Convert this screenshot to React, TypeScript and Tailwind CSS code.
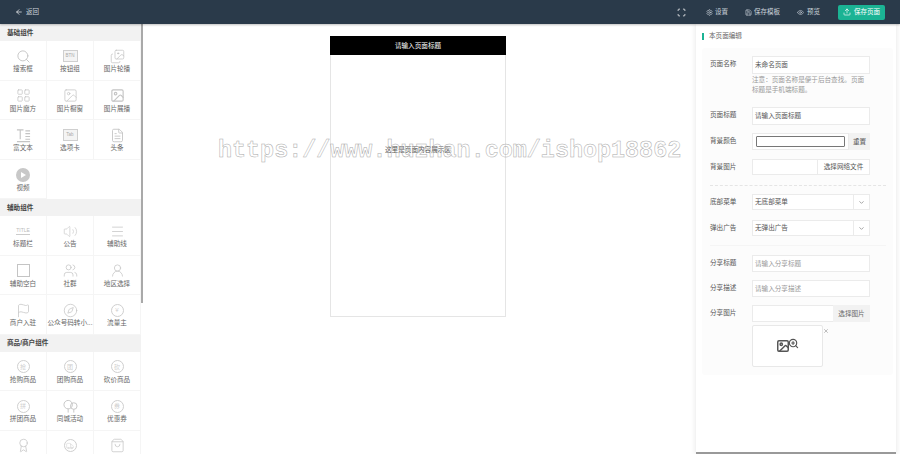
import { ArrowLeft, Scan, Settings, Save, Eye, Upload, Search, LayoutGrid, Image, Images, FileText, Volume2, Menu, Users, UserRound, Flag, Compass, Award, Truck, ShoppingBag, ChevronDown, X, ZoomIn } from 'lucide-react'

const iconClass = 'w-[15px] h-[15px] text-[#c4c4c4]'

function Glyph({ children }) {
  return (
    <span className="w-[13px] h-[13px] rounded-full border border-[#cfcfcf] flex items-center justify-center text-[6px] leading-none text-[#cfcfcf]">
      {children}
    </span>
  )
}

function BoxLabel({ children }) {
  return (
    <span className="w-[15px] h-[12px] border border-[#cfcfcf] bg-[#f4f4f4] flex items-center justify-center text-[4.5px] leading-none text-[#aaa]">
      {children}
    </span>
  )
}

function RichTextIcon() {
  return (
    <svg viewBox="0 0 16 16" className={iconClass} fill="none" stroke="currentColor" strokeWidth="1.2">
      <path d="M1 2h7M4.5 2v10M1 14.5h14M10 3h5M10 6h5M10 9h5M10 12h5" />
    </svg>
  )
}

function BalloonsIcon() {
  return (
    <svg viewBox="0 0 16 16" className={iconClass} fill="none" stroke="currentColor" strokeWidth="1">
      <circle cx="5.5" cy="6" r="4.5" />
      <circle cx="11.5" cy="7.5" r="3.5" />
      <path d="M5.5 10.5v4M11.5 11v3.5" />
    </svg>
  )
}

const basic = [
  { name: '搜索框', icon: <Search className={iconClass} strokeWidth={1.5} /> },
  { name: '按钮组', icon: <BoxLabel>BTN</BoxLabel> },
  { name: '图片轮播', icon: <Images className={iconClass} strokeWidth={1.2} /> },
  { name: '图片魔方', icon: <LayoutGrid className={iconClass} strokeWidth={1.2} /> },
  { name: '图片橱窗', icon: <Image className={iconClass} strokeWidth={1.2} /> },
  { name: '图片展播', icon: <Image className={iconClass} strokeWidth={1.8} /> },
  { name: '富文本', icon: <RichTextIcon /> },
  { name: '选项卡', icon: <BoxLabel>Tab</BoxLabel> },
  { name: '头条', icon: <FileText className={iconClass} strokeWidth={1.4} /> },
  {
    name: '视频',
    icon: (
      <span className="w-[14px] h-[14px] rounded-full bg-[#c8c8c8] flex items-center justify-center">
        <span className="w-0 h-0 border-y-[3.5px] border-y-transparent border-l-[5px] border-l-white ml-[1px]"></span>
      </span>
    ),
  },
]

const helper = [
  { name: '标题栏', icon: <span className="text-[5px] leading-none text-[#bbb] border-b border-[#ccc] pb-[1px]">TITLE</span> },
  { name: '公告', icon: <Volume2 className={iconClass} strokeWidth={1} /> },
  { name: '辅助线', icon: <Menu className={iconClass} strokeWidth={1.2} /> },
  { name: '辅助空白', icon: <span className="w-[13px] h-[13px] border border-[#c4c4c4]"></span> },
  { name: '社群', icon: <Users className={iconClass} strokeWidth={1.2} /> },
  { name: '地区选择', icon: <UserRound className={iconClass} strokeWidth={1.2} /> },
  { name: '商户入驻', icon: <Flag className={iconClass} strokeWidth={1.2} /> },
  { name: '公众号码转小...', icon: <Compass className={iconClass} strokeWidth={1.2} /> },
  { name: '流量主', icon: <Glyph>¥</Glyph> },
]

const goods = [
  { name: '抢购商品', icon: <Glyph>抢</Glyph> },
  { name: '团购商品', icon: <Glyph>团</Glyph> },
  { name: '砍价商品', icon: <Glyph>砍</Glyph> },
  { name: '拼团商品', icon: <Glyph>拼</Glyph> },
  { name: '同城活动', icon: <BalloonsIcon /> },
  { name: '优惠券', icon: <Glyph>券</Glyph> },
  { name: '', icon: <Award className={iconClass} strokeWidth={1.2} /> },
  { name: '', icon: <Glyph><Truck className="w-[8px] h-[8px]" strokeWidth={1.5} /></Glyph> },
  { name: '', icon: <ShoppingBag className={iconClass} strokeWidth={1.2} /> },
]

function Section({ title, items }) {
  return (
    <>
      <div className="h-[17px] shrink-0 bg-[#f2f2f2] pl-[7px] flex items-center text-[6.6px] font-bold text-[#444]">{title}</div>
      <div className="grid grid-cols-3 auto-rows-[39.5px] shrink-0">
        {items.map((item, i) => (
          <div key={i} className="flex flex-col items-center pt-[8px] border-r border-b border-[#f5f5f5]">
            <div className="h-[14px] flex items-center justify-center">{item.icon}</div>
            {item.name && <span className="mt-[1px] text-[6.6px] leading-[10px] text-[#666] whitespace-nowrap">{item.name}</span>}
          </div>
        ))}
      </div>
    </>
  )
}

function Field({ label, className, children }) {
  return (
    <div className={`flex items-start ${className}`}>
      <span className="w-[42px] shrink-0 text-[6.6px] leading-[16px] text-[#555]">{label}</span>
      <div className="w-[118px]">{children}</div>
    </div>
  )
}

function TextBox({ value, placeholder, h = 'h-[17px]' }) {
  return (
    <div className={`${h} border border-[#ebebeb] bg-white px-[2px] flex items-center text-[6.6px] ${placeholder ? 'text-[#999]' : 'text-[#555]'}`}>
      {value || placeholder}
    </div>
  )
}

function SelectBox({ value }) {
  return (
    <div className="h-[16px] border border-[#ebebeb] bg-white flex items-center text-[6.6px] text-[#555]">
      <span className="flex-1 px-[2px]">{value}</span>
      <span className="w-[16px] h-full border-l border-[#ebebeb] flex items-center justify-center">
        <ChevronDown className="w-[7px] h-[7px] text-[#999]" strokeWidth={3} />
      </span>
    </div>
  )
}

export default function App() {
  return (
    <div className="relative w-[900px] h-[454px] overflow-hidden bg-white flex flex-col font-['Liberation_Sans','Noto_Sans_CJK_SC',sans-serif]">
      <header className="h-[24px] shrink-0 bg-[#2a3a4a] flex items-center text-[6.5px] text-[#ccd3da] shadow-[0_1px_2px_rgba(0,0,0,0.25)] z-10">
        <div className="pl-[15px] flex items-center gap-[3px]">
          <ArrowLeft className="w-[8px] h-[8px] text-white" strokeWidth={2} />
          <span>返回</span>
        </div>
        <div className="ml-auto flex items-center">
          <Scan className="w-[9px] h-[9px] text-white mr-[20px]" strokeWidth={2} />
          <Settings className="w-[7px] h-[7px] mr-[2px]" />
          <span className="mr-[17px]">设置</span>
          <Save className="w-[7px] h-[7px] mr-[2px]" />
          <span className="mr-[17px]">保存模板</span>
          <Eye className="w-[7px] h-[7px] mr-[3px]" />
          <span className="mr-[18px]">预览</span>
          <button className="w-[47px] h-[15px] mr-[15px] rounded-[2px] bg-[#1bb394] text-white flex items-center justify-center gap-[3px] text-[6.5px]">
            <Upload className="w-[8px] h-[8px]" />
            保存页面
          </button>
        </div>
      </header>

      <main className="flex-1 flex min-h-0">
        <aside className="w-[141px] shrink-0 flex flex-col overflow-hidden">
          <Section title="基础组件" items={basic} />
          <Section title="辅助组件" items={helper} />
          <Section title="商品/商户组件" items={goods} />
        </aside>
        <div className="w-[2px] h-[279px] shrink-0 bg-[#a9a9a9]"></div>

        <section className="w-[553px] shrink-0 pl-[187px] pt-[12px]">
          <div className="w-[176px] h-[281px] border border-[#e5e5e5] relative flex flex-col">
            <div className="h-[19px] -mx-px -mt-px bg-black text-white text-[6.6px] flex items-center justify-center">请输入页面标题</div>
            <div className="pt-[90px] text-center text-[6.6px] text-[#555]">这里是页面内容展示区</div>
          </div>
        </section>

        <section className="w-[200px] shrink-0 border-b-2 border-[#999] shadow-[-2px_0_4px_rgba(0,0,0,0.06),2px_0_4px_rgba(0,0,0,0.06)] px-[6px]">
          <div className="h-[24px] flex items-center gap-[5px] text-[6.6px] text-[#666]">
            <span className="w-[2px] h-[7px] bg-[#1bb394]"></span>
            本页面编辑
          </div>
          <div className="w-[191px] h-[327px] bg-[#fcfcfc] rounded-[3px] pl-[8px] pt-[8px]">
            <Field label="页面名称">
              <TextBox value="未命名页面" h="h-[18px]" />
              <p className="text-[6.6px] leading-[10px] text-[#999] pt-[1px]">注意：页面名称是便于后台查找。页面标题是手机端标题。</p>
            </Field>
            <Field label="页面标题" className="mt-[12px]">
              <TextBox value="请输入页面标题" h="h-[18px]" />
            </Field>
            <Field label="背景颜色" className="mt-[8px]">
              <div className="h-[17px] flex">
                <div className="flex-1 border border-[#ebebeb] bg-white flex items-center pl-[3px]">
                  <span className="w-[89px] h-[11px] border border-[#777] rounded-[1px] bg-white"></span>
                </div>
                <span className="w-[21px] bg-[#f2f2f2] flex items-center justify-center text-[6.6px] text-[#555]">重置</span>
              </div>
            </Field>
            <Field label="背景图片" className="mt-[9px]">
              <div className="h-[16px] flex border border-[#ebebeb] bg-white">
                <span className="flex-1 border-r border-[#ebebeb]"></span>
                <span className="w-[51px] flex items-center justify-center text-[6.6px] text-[#555] whitespace-nowrap">选择网络文件</span>
              </div>
            </Field>
            <div className="mt-[10px] mr-[7px] border-t border-dashed border-[#e5e5e5]"></div>
            <Field label="底部菜单" className="mt-[8px]">
              <SelectBox value="无底部菜单" />
            </Field>
            <Field label="弹出广告" className="mt-[10px]">
              <SelectBox value="无弹出广告" />
            </Field>
            <div className="mt-[9px] mr-[7px] border-t border-[#f5f5f5]"></div>
            <Field label="分享标题" className="mt-[9px]">
              <TextBox placeholder="请输入分享标题" />
            </Field>
            <Field label="分享描述" className="mt-[8px]">
              <TextBox placeholder="请输入分享描述" />
            </Field>
            <Field label="分享图片" className="mt-[8px]">
              <div className="h-[17px] flex border border-[#ebebeb] bg-white">
                <span className="flex-1"></span>
                <span className="w-[37px] -my-px -mr-px bg-[#f2f2f2] flex items-center justify-center text-[6.6px] text-[#666]">选择图片</span>
              </div>
              <div className="relative mt-[3px] w-[71px] h-[42px] border border-[#e8e8e8] bg-white rounded-[2px] flex items-center justify-center">
                <Image className="w-[14px] h-[14px] text-[#555]" strokeWidth={2.5} />
                <ZoomIn className="w-[11px] h-[11px] -ml-[2px] -mt-[5px] text-[#555]" strokeWidth={2.5} />
                <X className="absolute -right-[7px] top-[2px] w-[6px] h-[6px] text-[#aaa]" strokeWidth={3} />
              </div>
            </Field>
          </div>
        </section>
      </main>

      <div className="absolute left-[218px] top-[136px] text-[23.4px] font-bold leading-[30px] whitespace-nowrap font-['Liberation_Mono',monospace] text-white/0 [-webkit-text-stroke:0.5px_#aaa] opacity-[0.99] pointer-events-none">
        https://www.huzhan.com/ishop18862
      </div>
    </div>
  )
}
